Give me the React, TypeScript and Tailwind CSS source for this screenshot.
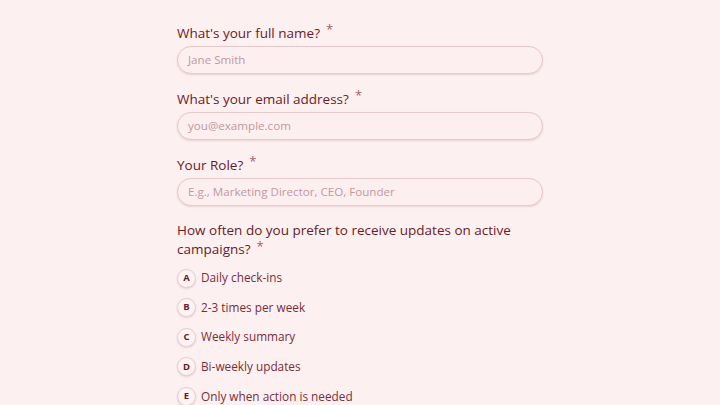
import React from "react";

const fields = [
  { label: "What's your full name?", placeholder: "Jane Smith" },
  { label: "What's your email address?", placeholder: "you@example.com" },
  { label: "Your Role?", placeholder: "E.g., Marketing Director, CEO, Founder" },
];

const options = [
  ["A", "Daily check-ins"],
  ["B", "2-3 times per week"],
  ["C", "Weekly summary"],
  ["D", "Bi-weekly updates"],
  ["E", "Only when action is needed"],
];

function Star() {
  return (
    <span className="inline-block align-top leading-[13px] ml-[6px] text-[13px] text-[#a8616c]">*</span>
  );
}

export default function App() {
  return (
    <div
      className="w-[720px] h-[405px] overflow-hidden bg-[#fdf0f0] flex justify-center"
      style={{ fontFamily: "'Open Sans', 'Noto Sans', sans-serif" }}
    >
      <div className="w-[366px] pt-[23px] flex flex-col">
        {fields.map((f) => (
          <div key={f.label} className="flex flex-col mb-[15px]">
            <label className="h-[20px] mb-[3px] text-[13.5px] leading-[20px] font-medium text-[#6a1b27]">
              {f.label}
              <Star />
            </label>
            <div className="h-[28px] rounded-full border border-[#e6c9cc] bg-[#fdeef0] shadow-[0_1px_2px_rgba(150,80,90,0.18)] flex items-center px-[10px] text-[11.6px] text-[#bf9aa1]">
              {f.placeholder}
            </div>
          </div>
        ))}
        <div className="text-[13.5px] leading-[19px] font-medium text-[#6a1b27] mb-[9px]">
          How often do you prefer to receive updates on active campaigns?
          <Star />
        </div>
        <div className="flex flex-col gap-[9.6px]">
          {options.map(([k, t]) => (
            <div key={k} className="flex items-center h-[20px]">
              <div className="w-[19px] h-[19px] rounded-full border border-[#e8cdd0] bg-[#fdf3f4] shadow-[0_1px_2px_rgba(150,80,90,0.2)] flex items-center justify-center text-[9.5px] font-bold text-[#6a1b27]">
                {k}
              </div>
              <span className="ml-[5px] text-[11.8px] text-[#7a2d38]">{t}</span>
            </div>
          ))}
        </div>
      </div>
    </div>
  );
}
